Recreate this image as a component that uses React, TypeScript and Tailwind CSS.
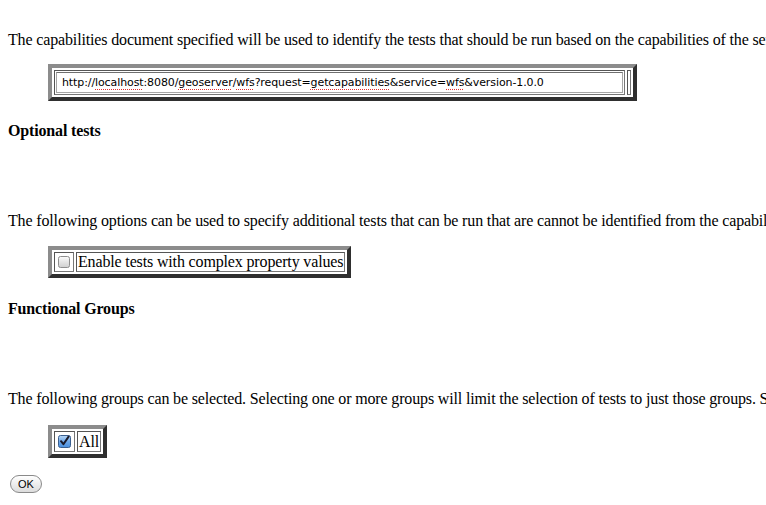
import React from "react";

const tableFrame =
  "inline-flex gap-[2px] p-[2px] border-4 border-t-[#8c8c8c] border-l-[#8c8c8c] border-r-[#2f2f2f] border-b-[#2f2f2f] bg-white";
const cell = "border border-t-[#555] border-l-[#555] border-r-[#777] border-b-[#777]";
const typo = "underline decoration-dotted decoration-[#e03030] underline-offset-[3px]";

function CheckBox({ checked }: { checked?: boolean }) {
  if (checked) {
    return (
      <svg width="13" height="13" viewBox="0 0 13 13" className="block">
        <defs>
          <linearGradient id="blue" x1="0" y1="0" x2="0" y2="1">
            <stop offset="0" stopColor="#b9d8f7" />
            <stop offset="0.5" stopColor="#6fa8e8" />
            <stop offset="1" stopColor="#4a8fdd" />
          </linearGradient>
        </defs>
        <rect x="0.5" y="0.5" width="12" height="12" rx="2" fill="url(#blue)" stroke="#3a5f8f" />
        <path d="M3 6.2 L5.4 9.2 L10.6 1.6" fill="none" stroke="#1a1a2a" strokeWidth="2" strokeLinecap="round" strokeLinejoin="round" />
      </svg>
    );
  }
  return (
    <svg width="12" height="12" viewBox="0 0 12 12" className="block">
      <defs>
        <linearGradient id="grey" x1="0" y1="0" x2="0" y2="1">
          <stop offset="0" stopColor="#fdfdfd" />
          <stop offset="0.5" stopColor="#e4e4e4" />
          <stop offset="1" stopColor="#cfcfcf" />
        </linearGradient>
      </defs>
      <rect x="0.5" y="0.5" width="11" height="11" rx="2" fill="url(#grey)" stroke="#8e8e8e" />
    </svg>
  );
}

export default function App() {
  return (
    <div className="h-[505px] w-[766px] overflow-hidden bg-white px-2 pt-[31px] font-['Liberation_Serif',serif] text-[16px] leading-[18px] tracking-[-0.15px] text-black">
      <p className="whitespace-nowrap">
        The capabilities document specified will be used to identify the tests that should be run based on the capabilities of the service.
      </p>

      <div className="ml-10 mt-[15px]">
        <div className={tableFrame}>
          <div className={`${cell} p-[1px]`}>
            <div className="flex h-[21px] w-[567px] items-center border border-[#a5a5a5] border-t-[#6f6f6f] bg-white pl-[5px] font-['DejaVu_Sans',sans-serif] text-[11px] leading-[14px] tracking-[-0.1px] whitespace-nowrap">
              <span>
                http://<span className={typo}>localhost</span>:8080/<span className={typo}>geoserver</span>/<span className={typo}>wfs</span>?request=<span className={typo}>getcapabilities</span>&amp;service=<span className={typo}>wfs</span>&amp;version-1.0.0
              </span>
            </div>
          </div>
          <div className={`${cell} w-[4px]`} />
        </div>
      </div>

      <h4 className="mt-[21px] font-bold">Optional tests</h4>

      <p className="mt-[72px] whitespace-nowrap">
        The following options can be used to specify additional tests that can be run that are cannot be identified from the capabilities document.
      </p>

      <div className="ml-10 mt-[16px]">
        <div className={tableFrame}>
          <div className={`${cell} flex h-[20px] w-[20px] items-center justify-center`}>
            <CheckBox />
          </div>
          <div className={`${cell} flex items-center px-[1px]`}>Enable tests with complex property values</div>
        </div>
      </div>

      <h4 className="mt-[22px] font-bold">Functional Groups</h4>

      <p className="mt-[72px] whitespace-nowrap">
        The following groups can be selected. Selecting one or more groups will limit the selection of tests to just those groups. Selecting none will run all tests.
      </p>

      <div className="ml-10 mt-[17px]">
        <div className={tableFrame}>
          <div className={`${cell} flex h-[21px] w-[21px] items-center justify-center`}>
            <CheckBox checked />
          </div>
          <div className={`${cell} flex items-center px-[1px]`}>All</div>
        </div>
      </div>

      <button
        type="button"
        className="ml-[2px] mt-[17px] flex h-[18px] w-[32px] items-center justify-center rounded-full border border-[#8a8a8a] bg-gradient-to-b from-white to-[#dcdcdc] font-['Liberation_Sans',sans-serif] text-[11px] leading-none tracking-normal text-black"
      >
        OK
      </button>
    </div>
  );
}
